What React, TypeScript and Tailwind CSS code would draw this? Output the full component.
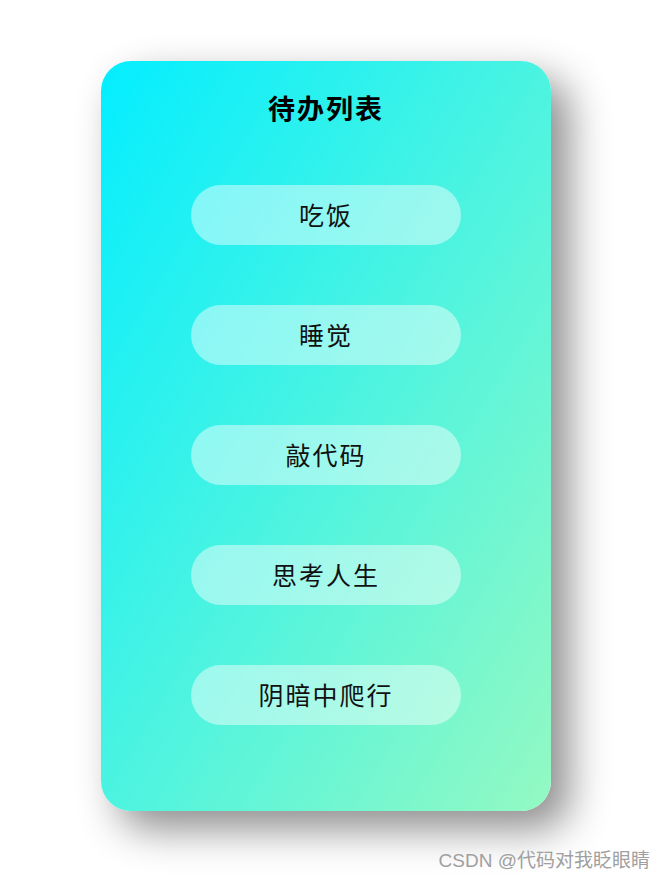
const todos = ['吃饭', '睡觉', '敲代码', '思考人生', '阴暗中爬行']

export default function App() {
  return (
    <div className="relative h-[879px] w-[665px] overflow-hidden bg-white pl-[101px] pt-[61px]">
      <div className="flex h-[750px] w-[450px] flex-col items-center rounded-[30px] bg-[linear-gradient(to_bottom_right,#03eeff,#94f9c2)] pt-[27px] shadow-[18px_18px_40px_rgba(0,0,0,0.45)] font-['Noto_Sans_CJK_SC',sans-serif]">
        <h1 className="text-[27px] font-bold leading-[40px] tracking-[2px] text-black">待办列表</h1>
        <ul className="mt-[57px] flex flex-col gap-[60px]">
          {todos.map((t) => (
            <li
              key={t}
              className="flex h-[60px] w-[270px] items-center justify-center rounded-full bg-white/45 text-[25px] tracking-[2px] text-[#111]"
            >
              {t}
            </li>
          ))}
        </ul>
      </div>
      <div className="absolute bottom-[6px] right-[15px] text-[19px] leading-[24px] text-[#a0a0a0] font-['Liberation_Sans','Noto_Sans_CJK_SC',sans-serif]">
        CSDN @代码对我眨眼睛
      </div>
    </div>
  )
}
